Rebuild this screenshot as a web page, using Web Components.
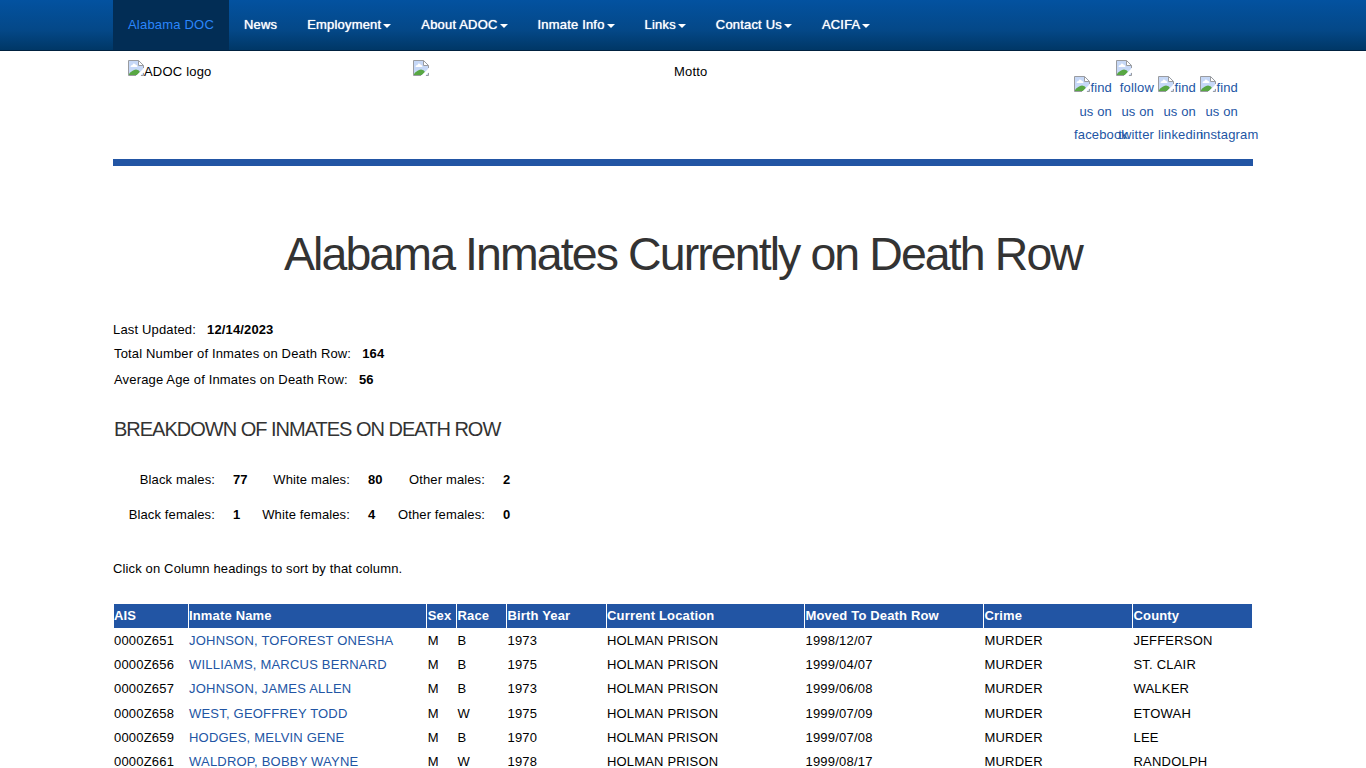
<!DOCTYPE html>
<html lang="en">
<head>
<meta charset="utf-8">
<title>Alabama Inmates Currently on Death Row</title>
<style>
html,body{margin:0;height:768px;overflow:hidden;background:#fff}
body{font:13px/24px "Liberation Sans",Arial,sans-serif;letter-spacing:.2px;color:#000}
</style>
</head>
<body>
<death-row-page></death-row-page>
<script>
const define = (name, html, setup) => customElements.define(name, class extends HTMLElement {
  connectedCallback() {
    if (this.shadowRoot) return;
    const root = this.attachShadow({mode: 'open'});
    const t = document.createElement('template');
    t.innerHTML = html;
    root.append(t.content.cloneNode(true));
    if (setup) setup(this, root);
  }
});

define('nav-item', `<style>
:host{display:block;height:50px;line-height:20px;padding:15px 15px 0;box-sizing:border-box;color:#fff;text-shadow:0 0 1px #fff;white-space:nowrap;letter-spacing:.18px}
:host([active]){background:#022d55;color:#2b86fc;text-shadow:none;letter-spacing:.2px}
i{display:none;width:0;height:0;margin-left:2px;vertical-align:middle;border-top:4px solid #fff;border-left:4px solid transparent;border-right:4px solid transparent}
:host([menu]) i{display:inline-block}
</style><slot></slot><i></i>`);

define('site-nav', `<style>
:host{display:block;height:50px;border-bottom:1px solid #00213f;background:linear-gradient(#0352a0 0%,#044888 60%,#003766 100%)}
nav{width:1140px;margin:0 auto;display:flex}
</style><nav><nav-item active>Alabama DOC</nav-item><nav-item>News</nav-item><nav-item menu>Employment</nav-item><nav-item menu>About ADOC</nav-item><nav-item menu>Inmate Info</nav-item><nav-item menu>Links</nav-item><nav-item menu>Contact Us</nav-item><nav-item menu>ACIFA</nav-item></nav>`);

define('missing-image', `<style>
:host{display:inline-block;width:16px;height:16px;vertical-align:baseline}svg{display:block}
</style><svg width="16" height="16" viewBox="0 0 16 16">
<path d="M.5.5H11L15.5 5V15.5H.5Z" fill="#c6d8f7"/>
<path d="M2.500 7Q2.500 5 4.500 5Q5.500 2.500 7.500 4.500Q9.500 5 9.500 7Z" fill="#fff"/>
<path d="M1 15V14Q4 10 8 9.500Q11 9.500 12 12L9 15Z" fill="#58a743"/>
<path d="M8 16L16 8V12L12 16Z" fill="#fff"/>
<path d="M10.500.5V5.500H15.500L10.500.5Z" fill="#fff"/>
<path d="M8 15.500H.5V.5H10.500L15.500 5.500V8M13 15.500H15.500V13M10.500.5V5.500H15.500" fill="none" stroke="#9a9ca0"/>
</svg>`);

define('social-link', `<style>
:host{display:block;width:38px;line-height:23.6px;color:#2255a4;text-align:right;letter-spacing:.15px}
:host([stacked]) ::slotted(missing-image){display:block}
</style><slot></slot>`);

define('site-header', `<style>
:host{display:flex;box-sizing:border-box;height:115px;border-bottom:7px solid #2255a4;padding:9px 0 0 15px}
.logo{width:285px;line-height:24px}.seal{width:261px}.motto{width:400px}
.top{height:24px;line-height:24px;display:flex;align-items:flex-start}
.t{line-height:23px}
.social{display:flex;gap:4px;align-items:flex-end;height:87px}
</style><div class="logo top"><missing-image></missing-image><span class="t">ADOC logo</span></div>
<div class="seal top"><missing-image></missing-image></div><div class="motto top"><span class="t">Motto</span></div>
<div class="social">
<social-link><missing-image></missing-image>find us on facebook</social-link>
<social-link stacked><missing-image></missing-image>follow us on twitter</social-link>
<social-link><missing-image></missing-image>find us on linkedin</social-link>
<social-link><missing-image></missing-image>find us on instagram</social-link></div>`);

define('stat-line', `<style>
:host{display:flex;gap:11px;letter-spacing:.16px}b{font-weight:bold;letter-spacing:.14px}
</style><span><slot></slot></span><b></b>`, (el, r) => { r.querySelector('b').textContent = el.getAttribute('value'); });

define('inmate-breakdown', `<style>
:host{display:grid;grid-template-columns:102px 33px 102px 33px 102px 33px;row-gap:11px;letter-spacing:.13px}
span{text-align:right;white-space:nowrap}b{box-sizing:border-box;padding-left:18px}
</style><span>Black males:</span><b>77</b><span>White males:</span><b>80</b><span>Other males:</span><b>2</b>
<span>Black females:</span><b>1</b><span>White females:</span><b>4</b><span>Other females:</span><b>0</b>`);

define('inmate-row', `<style>
:host{display:grid;grid-template-columns:74px 237px 29px 49px 99px 197px 178px 148px 119px;column-gap:1px;height:24.3px;line-height:24.3px;white-space:nowrap}
:host([head]){height:24px;line-height:24px;margin-bottom:.8px;font-weight:bold;color:#fff;letter-spacing:.16px}
:host([head]) span{background:#2255a4}
:host(:not([head])) span:nth-of-type(2){color:#2255a4;letter-spacing:.21px}
span:nth-of-type(3){padding-left:.7px}
span:nth-of-type(n+4){padding-left:.5px}
span:nth-of-type(6){padding-left:0;letter-spacing:.17px}
</style>`, (el, r) => {
  for (const v of el.getAttribute('cells').split('|')) {
    const s = document.createElement('span'); s.textContent = v; r.append(s);
  }
});

define('inmate-table', `<style>:host{display:block;padding-left:1px}</style>`, (el, r) => {
  const rows = ['AIS|Inmate Name|Sex|Race|Birth Year|Current Location|Moved To Death Row|Crime|County',
  '0000Z651|JOHNSON, TOFOREST ONESHA|M|B|1973|HOLMAN PRISON|1998/12/07|MURDER|JEFFERSON',
  '0000Z656|WILLIAMS, MARCUS BERNARD|M|B|1975|HOLMAN PRISON|1999/04/07|MURDER|ST. CLAIR',
  '0000Z657|JOHNSON, JAMES ALLEN|M|B|1973|HOLMAN PRISON|1999/06/08|MURDER|WALKER',
  '0000Z658|WEST, GEOFFREY TODD|M|W|1975|HOLMAN PRISON|1999/07/09|MURDER|ETOWAH',
  '0000Z659|HODGES, MELVIN GENE|M|B|1970|HOLMAN PRISON|1999/07/08|MURDER|LEE',
  '0000Z661|WALDROP, BOBBY WAYNE|M|W|1978|HOLMAN PRISON|1999/08/17|MURDER|RANDOLPH'];
  rows.forEach((c, i) => {
    const e = document.createElement('inmate-row');
    e.setAttribute('cells', c);
    if (!i) e.setAttribute('head', '');
    r.append(e);
  });
});

define('death-row-page', `<style>
:host{display:block;height:768px;overflow:hidden}
main{width:1140px;margin:0 auto}
h1{margin:58px 0 0;font-size:46.5px;line-height:60px;font-weight:normal;letter-spacing:-1.92px;color:#333;text-align:center;white-space:nowrap}
.stats{margin-top:34px}
.stats stat-line+stat-line{padding-left:1px}
.stats stat-line:last-child{margin-top:2px}
h2{margin:24px 0 0;padding-left:1px;font-size:20px;line-height:26px;font-weight:normal;letter-spacing:-1px;color:#333}
inmate-breakdown{margin-top:26px}
p{margin:30px 0 23px;letter-spacing:.14px}
</style><site-nav></site-nav><main><site-header></site-header>
<h1>Alabama Inmates Currently on Death Row</h1>
<div class="stats"><stat-line value="12/14/2023">Last Updated:</stat-line><stat-line value="164">Total Number of Inmates on Death Row:</stat-line><stat-line value="56">Average Age of Inmates on Death Row:</stat-line></div>
<h2>BREAKDOWN OF INMATES ON DEATH ROW</h2>
<inmate-breakdown></inmate-breakdown>
<p>Click on Column headings to sort by that column.</p>
<inmate-table></inmate-table></main>`);
</script>
</body>
</html>
